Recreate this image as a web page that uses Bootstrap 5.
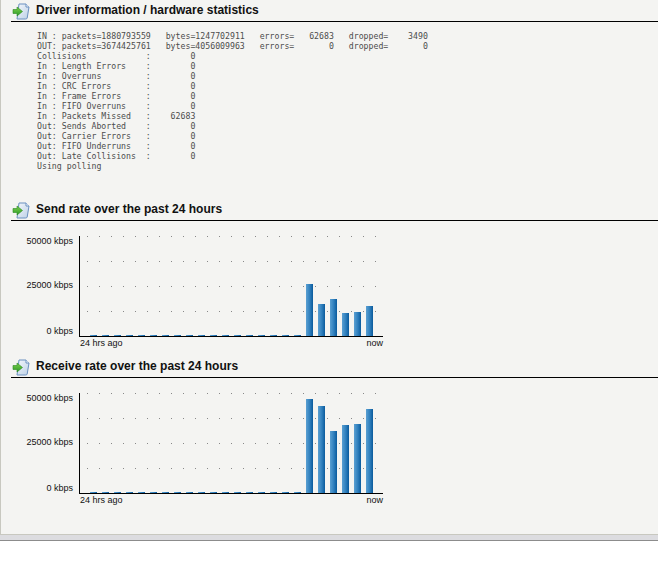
<!DOCTYPE html>
<html><head><meta charset="utf-8"><title>Driver information</title>
<link href="https://cdn.jsdelivr.net/npm/bootstrap@5.3.0/dist/css/bootstrap.min.css" rel="stylesheet">
<style>
html,body{background:#fff;margin:0;overflow:hidden}
.shell{width:658px;height:541px;background:#dcdce0;border-bottom:1px solid #8c8c8c}
.panel{height:535px;background:#f4f4f2;border-left:1px solid #c8c8c0;border-bottom:1px solid #c8c8c0;padding-left:10px}
.sect-h{height:22px;border-bottom:1px solid #000;padding-left:1px}
.sect-h svg{flex:none;width:19px;height:18px}
.sect-h h1{font:bold 12px/1 "Liberation Sans",Arial,sans-serif;color:#111;margin:0 0 2px 5px;white-space:nowrap}
.rawtext{font:8.22px/10px "DejaVu Sans Mono",monospace;color:#4c4c4c;margin:9px 0 0 26px;height:168px;overflow:hidden}
.graph{display:block;width:647px;height:135px}
.graph text{font:9px "Liberation Sans",Arial,sans-serif;fill:#111}
</style></head><body>
<svg width="0" height="0" style="position:absolute"><defs>
<linearGradient id="bg"><stop offset="0" stop-color="#5ba0d2"/><stop offset=".55" stop-color="#2f7fbd"/><stop offset="1" stop-color="#0a5a9c"/></linearGradient>
<linearGradient id="ar" x2="0" y2="1"><stop offset="0" stop-color="#7fd04a"/><stop offset="1" stop-color="#2a9a28"/></linearGradient>
<linearGradient id="pg" x2="1" y2="1"><stop offset="0" stop-color="#f4f7fb"/><stop offset="1" stop-color="#bcd0e6"/></linearGradient>
<symbol id="ic" viewBox="0 0 19 18"><path d="M7 2 H14 L17 5 L15.200 16 Q15 17 13.500 17 H5 Z" fill="url(#pg)" stroke="#6a90c0"/><path d="M14 2 V5 H17" fill="#fff" stroke="#6a90c0"/><path d="M1 7.500 H5 V5 L10.500 9.500 L5 14 V11.500 H1Z" fill="url(#ar)" stroke="#2c8a22" stroke-width=".6"/></symbol>
</defs></svg>
<div class="shell"><div class="panel">
<div class="sect-h d-flex align-items-center"><svg><use href="#ic"/></svg><h1>Driver information / hardware statistics</h1></div>
<pre class="rawtext">IN : packets=1880793559   bytes=1247702911   errors=   62683   dropped=    3490
OUT: packets=3674425761   bytes=4056009963   errors=       0   dropped=       0
Collisions            :        0
In : Length Errors    :        0
In : Overruns         :        0
In : CRC Errors       :        0
In : Frame Errors     :        0
In : FIFO Overruns    :        0
In : Packets Missed   :    62683
Out: Sends Aborted    :        0
Out: Carrier Errors   :        0
Out: FIFO Underruns   :        0
Out: Late Collisions  :        0
Using polling</pre>
<div class="sect-h d-flex align-items-center"><svg><use href="#ic"/></svg><h1>Send rate over the past 24 hours</h1></div>
<svg class="graph" id="g1" viewBox="0 0 647 135"></svg>
<div class="sect-h d-flex align-items-center"><svg><use href="#ic"/></svg><h1>Receive rate over the past 24 hours</h1></div>
<svg class="graph" id="g2" viewBox="0 0 647 135"></svg>
</div></div>
<script>
function draw(id,top,axis,labels,tops){
 var s='',ox=-11,oy=-top;
 [0,25,50,75].forEach(function(d){for(var x=87;x<=375;x+=12)s+='<rect x="'+x+'" y="'+(axis-100+d)+'" width="1" height="1" fill="#888"/>';});
 for(var i=0;i<24;i++){var x=90+12*i,t=i<18?axis-1:tops[i-18];s+='<rect x="'+x+'" y="'+t+'" width="7" height="'+(axis-t)+'" fill="url(#bg)"/>';}
 s+='<rect x="79" y="'+(axis-100)+'" width="1" height="100" fill="#000"/><rect x="79" y="'+axis+'" width="304" height="1" fill="#000"/>';
 labels.forEach(function(l){s+='<text x="73" y="'+l[1]+'" text-anchor="end">'+l[0]+'</text>';});
 s+='<text x="80" y="'+(axis+10)+'">24 hrs ago</text><text x="383" y="'+(axis+10)+'" text-anchor="end">now</text>';
 var e=document.getElementById(id);e.innerHTML='<g transform="translate('+ox+','+oy+')">'+s+'</g>';
}
draw('g1',221,336,[['50000 kbps',244],['25000 kbps',288],['0 kbps',334]],[284,304,299,313,312,306]);
draw('g2',378,493,[['50000 kbps',401],['25000 kbps',445],['0 kbps',491]],[399,406,431,425,424,409]);
</script>
</body></html>
